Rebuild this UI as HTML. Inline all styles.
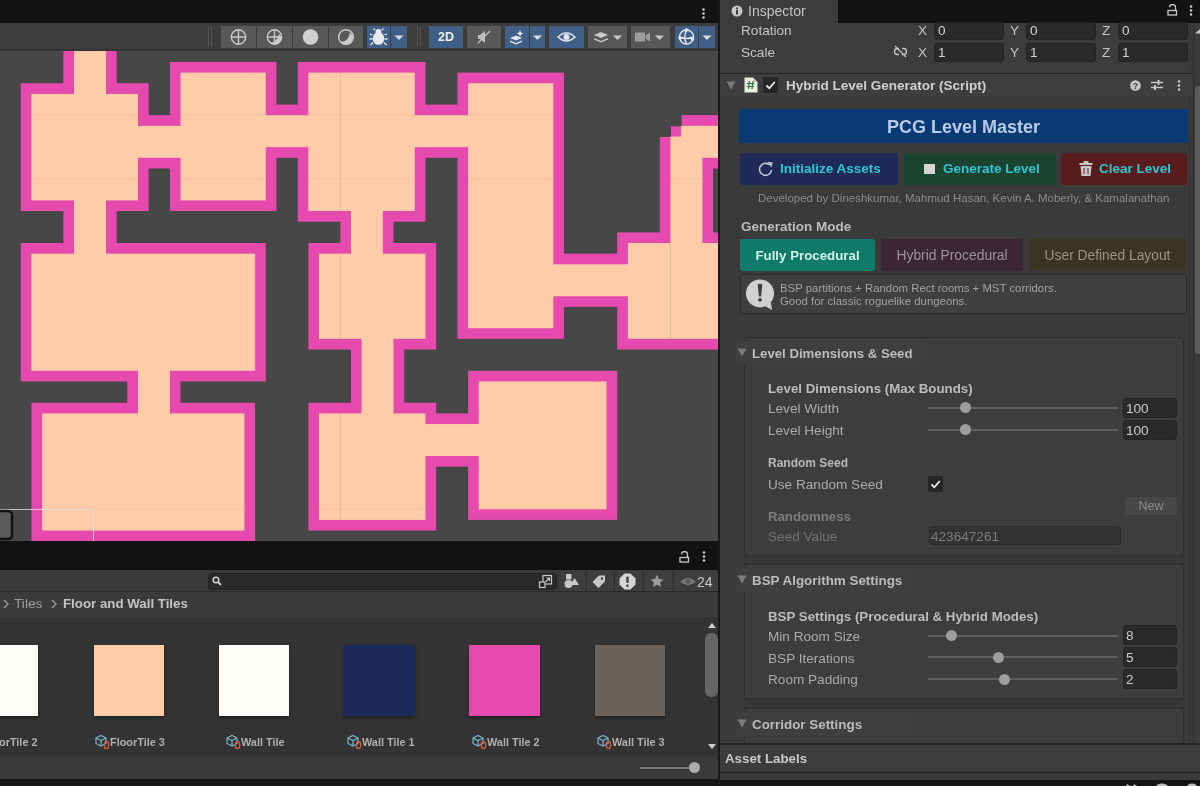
<!DOCTYPE html>
<html><head><meta charset="utf-8">
<style>
*{box-sizing:border-box;margin:0;padding:0}
html,body{width:1200px;height:786px;overflow:hidden;background:#121212;font-family:"Liberation Sans",sans-serif;position:relative}
.a{position:absolute}
.t{position:absolute;white-space:nowrap;line-height:1;will-change:transform}
.tb{position:absolute;top:26px;height:22px;background:#585858}
.bl{background:#3f5f87}
.fld{position:absolute;background:#2a2a2a;border:1px solid #232323;border-radius:3px}
.lbl{color:#c4c4c4;font-size:13.6px}
.bold{font-weight:bold}
</style></head><body>
<!-- SCENE PANEL -->
<div class="a" style="left:0;top:0;width:718px;height:23px;background:#121212"></div>
<div class="a" style="left:702px;top:5px;width:3px;height:11px">
 <svg width="3" height="11"><circle cx="1.5" cy="1.5" r="1.3" fill="#c8c8c8"/><circle cx="1.5" cy="5.5" r="1.3" fill="#c8c8c8"/><circle cx="1.5" cy="9.5" r="1.3" fill="#c8c8c8"/></svg></div>
<div class="a" style="left:0;top:23px;width:718px;height:28px;background:#3c3c3c"></div><div class="a" style="left:0;top:49px;width:718px;height:2px;background:#333"></div>
<div class="a" style="left:208px;top:27px;width:1px;height:20px;background:#555"></div>
<div class="a" style="left:211px;top:27px;width:1px;height:20px;background:#555"></div>
<div class="a" style="left:417px;top:27px;width:1px;height:20px;background:#555"></div>
<div class="a" style="left:420px;top:27px;width:1px;height:20px;background:#555"></div>
<!-- group1 -->
<div class="tb" style="left:221px;width:35px"><svg width="35" height="22"><g fill="none" stroke="#c9c9c9" stroke-width="1.4"><circle cx="17.5" cy="11" r="7.2"/><path d="M10.3 11H24.7M17.5 3.8V18.2"/></g></svg></div>
<div class="tb" style="left:257px;width:35px"><svg width="35" height="22"><g fill="none" stroke="#c9c9c9" stroke-width="1.4"><circle cx="17.5" cy="11" r="7.2"/><path d="M10.3 11H24.7M17.5 3.8V18.2"/></g><path d="M24.7 11A7.2 7.2 0 0 1 10.3 11H17.5V3.8A7.2 7.2 0 0 1 24.7 11Z" fill="#c9c9c9" opacity="0"/><path d="M24.7 11A7.2 7.2 0 0 1 13 16.8Q20 16 22 8Z" fill="#c9c9c9"/></svg></div>
<div class="tb" style="left:293px;width:35px"><svg width="35" height="22"><circle cx="17.5" cy="11" r="7.8" fill="#cfcfcf"/></svg></div>
<div class="tb" style="left:329px;width:34px"><svg width="34" height="22"><circle cx="17" cy="11" r="7.3" fill="none" stroke="#c9c9c9" stroke-width="1.5"/><path d="M24.3 11A7.3 7.3 0 0 1 11 15.5Q19.5 17 21 6Z" fill="#c9c9c9"/></svg></div>
<!-- bug -->
<div class="tb bl" style="left:367px;width:23px"><svg width="23" height="22"><g fill="#e8eaee"><ellipse cx="11.5" cy="12.5" rx="5.8" ry="6.3"/><circle cx="11.5" cy="6" r="3"/></g><g stroke="#e8eaee" stroke-width="1.3" fill="none"><path d="M8 4L6.5 2.5M15 4L16.5 2.5M5.5 9L3 8M17.5 9L20 8M5.5 13H2.5M17.5 13H20.5M6 16.5L3.5 19M17 16.5L19.5 19"/></g></svg></div>
<div class="tb bl" style="left:391px;width:16px"><svg width="16" height="22"><path d="M3.5 9.5H12.5L8 14Z" fill="#d8dde5"/></svg></div>
<!-- 2D -->
<div class="tb bl" style="left:429px;width:34px"><span class="t" style="left:0;width:34px;text-align:center;top:5px;font-size:12.5px;font-weight:bold;color:#f0f0f0">2D</span></div>
<!-- audio -->
<div class="tb" style="left:467px;width:34px"><svg width="34" height="22"><path d="M18 7L13 11H11V15H13L18 19Z" fill="#c0c0c0" transform="translate(0,-2)"/><path d="M11 17L23 5" stroke="#c0c0c0" stroke-width="1.5"/></svg></div>
<!-- effects -->
<div class="tb bl" style="left:505px;width:24px"><svg width="24" height="22"><g fill="#e4e8ee"><path d="M5 12L11 9.5L17 12L11 14.5Z"/><path d="M5 14.5L11 17L17 14.5L17 16L11 18.5L5 16Z"/><path d="M15 4L16 6.5L18.5 7.5L16 8.5L15 11L14 8.5L11.5 7.5L14 6.5Z"/></g></svg></div>
<div class="tb bl" style="left:530px;width:15px"><svg width="15" height="22"><path d="M3 9.5H12L7.5 14Z" fill="#d8dde5"/></svg></div>
<!-- eye -->
<div class="tb bl" style="left:549px;width:35px"><svg width="35" height="22"><path d="M9 11Q17.5 3 26 11Q17.5 19 9 11Z" fill="none" stroke="#dfe4ea" stroke-width="1.6"/><circle cx="17.5" cy="11" r="3" fill="#dfe4ea"/></svg></div>
<!-- layers -->
<div class="tb" style="left:588px;width:39px"><svg width="39" height="22"><g fill="#c9c9c9"><path d="M6 9L13 6L20 9L13 12Z"/><path d="M6 12L13 15L20 12L20 13.5L13 16.5L6 13.5Z"/></g><path d="M25 9.5H34L29.5 14Z" fill="#c9c9c9"/></svg></div>
<!-- camera -->
<div class="tb" style="left:631px;width:39px"><svg width="39" height="22"><g fill="#9e9e9e"><rect x="4" y="6.5" width="10" height="9"/><path d="M14.5 9.5L19 6.5V15.5L14.5 12.5Z"/></g><path d="M24 9.5H33L28.5 14Z" fill="#c9c9c9"/></svg></div>
<!-- gizmo -->
<div class="tb bl" style="left:675px;width:23px"><svg width="23" height="22"><g fill="none" stroke="#e4e8ee" stroke-width="1.4"><circle cx="11.5" cy="11" r="7"/><path d="M4.5 11Q11.5 14 18.5 11M11.5 4Q8 11 11.5 18"/></g><g fill="#e4e8ee"><circle cx="11.5" cy="4" r="1.8"/><circle cx="5" cy="12" r="1.8"/><circle cx="17.5" cy="13" r="1.8"/></g></svg></div>
<div class="tb bl" style="left:699px;width:16px"><svg width="16" height="22"><path d="M3.5 9.5H12.5L8 14Z" fill="#d8dde5"/></svg></div>

<div class="a" style="left:0;top:51px;width:718px;height:490px;background:#474747;overflow:hidden">
<svg width="718" height="490" style="position:absolute;left:0;top:0"><g fill="#e64aae"><rect x="20.80" y="32.25" width="127.80" height="127.80"/><rect x="63.40" y="-42.30" width="53.25" height="106.50"/><rect x="116.65" y="64.20" width="85.20" height="53.25"/><rect x="169.90" y="10.95" width="106.50" height="149.10"/><rect x="244.45" y="53.55" width="85.20" height="53.25"/><rect x="297.70" y="10.95" width="127.80" height="159.75"/><rect x="393.55" y="53.55" width="95.85" height="53.25"/><rect x="457.45" y="21.60" width="106.50" height="266.25"/><rect x="532.00" y="202.65" width="117.15" height="53.25"/><rect x="617.20" y="181.35" width="149.10" height="117.15"/><rect x="659.80" y="74.85" width="53.25" height="138.45"/><rect x="670.45" y="64.20" width="42.60" height="42.60"/><rect x="681.10" y="64.20" width="85.20" height="53.25"/><rect x="63.40" y="128.10" width="53.25" height="95.85"/><rect x="20.80" y="192.00" width="244.95" height="138.45"/><rect x="127.30" y="298.50" width="53.25" height="85.20"/><rect x="31.45" y="351.75" width="223.65" height="138.45"/><rect x="340.30" y="138.75" width="53.25" height="85.20"/><rect x="308.35" y="192.00" width="127.80" height="106.50"/><rect x="350.95" y="266.55" width="53.25" height="117.15"/><rect x="308.35" y="351.75" width="127.80" height="127.80"/><rect x="404.20" y="362.40" width="95.85" height="53.25"/><rect x="468.10" y="319.80" width="149.10" height="149.10"/></g><g fill="#474747"><rect x="659.30" y="74.35" width="11.65" height="11.65"/><rect x="669.95" y="63.70" width="11.65" height="11.65"/></g><g fill="#ffcba8"><rect x="31.45" y="42.90" width="106.50" height="106.50"/><rect x="74.05" y="-31.65" width="31.95" height="85.20"/><rect x="127.30" y="74.85" width="63.90" height="31.95"/><rect x="180.55" y="21.60" width="85.20" height="127.80"/><rect x="255.10" y="64.20" width="63.90" height="31.95"/><rect x="308.35" y="21.60" width="106.50" height="138.45"/><rect x="404.20" y="64.20" width="74.55" height="31.95"/><rect x="468.10" y="32.25" width="85.20" height="244.95"/><rect x="542.65" y="213.30" width="95.85" height="31.95"/><rect x="627.85" y="192.00" width="127.80" height="95.85"/><rect x="670.45" y="85.50" width="31.95" height="117.15"/><rect x="681.10" y="74.85" width="21.30" height="21.30"/><rect x="691.75" y="74.85" width="63.90" height="31.95"/><rect x="74.05" y="138.75" width="31.95" height="74.55"/><rect x="31.45" y="202.65" width="223.65" height="117.15"/><rect x="137.95" y="309.15" width="31.95" height="63.90"/><rect x="42.10" y="362.40" width="202.35" height="117.15"/><rect x="350.95" y="149.40" width="31.95" height="63.90"/><rect x="319.00" y="202.65" width="106.50" height="85.20"/><rect x="361.60" y="277.20" width="31.95" height="95.85"/><rect x="319.00" y="362.40" width="106.50" height="106.50"/><rect x="414.85" y="373.05" width="74.55" height="31.95"/><rect x="478.75" y="330.45" width="127.80" height="127.80"/></g><clipPath id="fl"><rect x="31.45" y="42.90" width="106.50" height="106.50"/><rect x="74.05" y="-31.65" width="31.95" height="85.20"/><rect x="127.30" y="74.85" width="63.90" height="31.95"/><rect x="180.55" y="21.60" width="85.20" height="127.80"/><rect x="255.10" y="64.20" width="63.90" height="31.95"/><rect x="308.35" y="21.60" width="106.50" height="138.45"/><rect x="404.20" y="64.20" width="74.55" height="31.95"/><rect x="468.10" y="32.25" width="85.20" height="244.95"/><rect x="542.65" y="213.30" width="95.85" height="31.95"/><rect x="627.85" y="192.00" width="127.80" height="95.85"/><rect x="670.45" y="85.50" width="31.95" height="117.15"/><rect x="681.10" y="74.85" width="21.30" height="21.30"/><rect x="691.75" y="74.85" width="63.90" height="31.95"/><rect x="74.05" y="138.75" width="31.95" height="74.55"/><rect x="31.45" y="202.65" width="223.65" height="117.15"/><rect x="137.95" y="309.15" width="31.95" height="63.90"/><rect x="42.10" y="362.40" width="202.35" height="117.15"/><rect x="350.95" y="149.40" width="31.95" height="63.90"/><rect x="319.00" y="202.65" width="106.50" height="85.20"/><rect x="361.60" y="277.20" width="31.95" height="95.85"/><rect x="319.00" y="362.40" width="106.50" height="106.50"/><rect x="414.85" y="373.05" width="74.55" height="31.95"/><rect x="478.75" y="330.45" width="127.80" height="127.80"/></clipPath>
<g clip-path="url(#fl)"><g stroke="#d8c08a" stroke-width="1" fill="none" opacity="0.45"><path d="M0 64H718M0 127.8H718M0 458H718"/></g><g stroke="#d89870" stroke-width="1" fill="none" opacity="0.35"><path d="M340.5 0V490M670.5 0V490"/></g></g>
<g stroke="#e0e0e0" stroke-width="1" fill="none" opacity="0.8"><path d="M0 458.5H93.5V490"/></g>
<rect x="-6" y="460" width="18" height="28" rx="4" fill="#5a5a5a" stroke="#111" stroke-width="2.5"/>
</svg>
</div>
<div class="a" style="left:718px;top:0;width:2px;height:786px;background:#191919"></div>

<!-- INSPECTOR -->
<div class="a" style="left:720px;top:0;width:480px;height:786px;background:#3a3a3a"></div>
<div class="a" style="left:720px;top:0;width:480px;height:23px;background:#121212"></div>
<div class="a" style="left:720px;top:0;width:118px;height:23px;background:#3c3c3c"></div>
<svg class="a" style="left:731px;top:5px" width="12" height="12"><circle cx="6" cy="6" r="5.5" fill="#c8c8c8"/><rect x="5" y="5" width="2" height="4.5" fill="#3c3c3c"/><circle cx="6" cy="3.3" r="1.1" fill="#3c3c3c"/></svg>
<span class="t" style="left:748px;top:4px;font-size:14px;color:#c4c4c4">Inspector</span>
<svg class="a" style="left:1167px;top:4px" width="11" height="12"><path d="M2.5 3.2A3 2.6 0 0 1 8.5 3.2V6.5" fill="none" stroke="#c8c8c8" stroke-width="1.3"/><rect x="1" y="6.5" width="8.5" height="4.5" fill="none" stroke="#c8c8c8" stroke-width="1.3"/></svg>
<svg class="a" style="left:1189px;top:5px" width="4" height="11"><circle cx="2" cy="1.5" r="1.3" fill="#c8c8c8"/><circle cx="2" cy="5.5" r="1.3" fill="#c8c8c8"/><circle cx="2" cy="9.5" r="1.3" fill="#c8c8c8"/></svg>

<!-- transform rows -->
<div class="a" style="left:720px;top:23px;width:467px;height:50px;background:#3c3c3c"></div>
<span class="t lbl" style="left:741px;top:24px">Rotation</span>
<span class="t lbl" style="left:741px;top:46px">Scale</span>
<svg class="a" style="left:893px;top:45px" width="15" height="13"><g fill="none" stroke="#c8c8c8" stroke-width="1.3"><path d="M6 3.5H4.5A3 3 0 0 0 4.5 9.5H6M9 3.5H10.5A3 3 0 0 1 10.5 9.5H9M2 1L13 12"/></g></svg>
<span class="t lbl" style="left:918px;top:24px">X</span><div class="fld" style="left:934px;top:22px;width:70px;height:18px"></div><span class="t lbl" style="left:938px;top:24px;color:#d2d2d2">0</span>
<span class="t lbl" style="left:1010px;top:24px">Y</span><div class="fld" style="left:1026px;top:22px;width:70px;height:18px"></div><span class="t lbl" style="left:1030px;top:24px;color:#d2d2d2">0</span>
<span class="t lbl" style="left:1102px;top:24px">Z</span><div class="fld" style="left:1118px;top:22px;width:70px;height:18px"></div><span class="t lbl" style="left:1122px;top:24px;color:#d2d2d2">0</span>
<span class="t lbl" style="left:918px;top:46px">X</span><div class="fld" style="left:934px;top:43px;width:70px;height:19px"></div><span class="t lbl" style="left:938px;top:46px;color:#d2d2d2">1</span>
<span class="t lbl" style="left:1010px;top:46px">Y</span><div class="fld" style="left:1026px;top:43px;width:70px;height:19px"></div><span class="t lbl" style="left:1030px;top:46px;color:#d2d2d2">1</span>
<span class="t lbl" style="left:1102px;top:46px">Z</span><div class="fld" style="left:1118px;top:43px;width:70px;height:19px"></div><span class="t lbl" style="left:1122px;top:46px;color:#d2d2d2">1</span>

<!-- component header -->
<div class="a" style="left:720px;top:73px;width:473px;height:1px;background:#262626"></div>
<div class="a" style="left:720px;top:74px;width:473px;height:22px;background:#3e3e3e"></div>
<svg class="a" style="left:726px;top:81px" width="10" height="9"><path d="M0.5 0.5H9.5L5 8.5Z" fill="#7a7a7a"/></svg>
<svg class="a" style="left:744px;top:77px" width="14" height="16"><path d="M0.5 0.5H9L13.5 5V15.5H0.5Z" fill="#ecece6"/><path d="M9 0.5V5H13.5" fill="#c8c8c0"/><g stroke="#2f7a3a" stroke-width="1.2"><path d="M5.5 4L4.5 12M9 4L8 12M3 6.5H10.5M2.7 9.5H10"/></g></svg>
<div class="a" style="left:763px;top:77px;width:15px;height:16px;background:#262626;border-radius:2px"></div>
<svg class="a" style="left:763px;top:77px" width="15" height="16"><path d="M3.5 8.5L6.3 11.3L11.8 5" fill="none" stroke="#f0f0f0" stroke-width="1.8"/></svg>
<span class="t bold" style="left:786px;top:79px;font-size:13.5px;color:#d0d0d0">Hybrid Level Generator (Script)</span>
<svg class="a" style="left:1130px;top:80px;will-change:transform" width="11" height="11"><circle cx="5.5" cy="5.5" r="5.3" fill="#c8c8c8"/><text x="5.5" y="8.8" font-size="9" font-weight="bold" text-anchor="middle" fill="#3e3e3e" font-family="Liberation Sans">?</text></svg>
<svg class="a" style="left:1151px;top:79px" width="12" height="12"><g stroke="#c8c8c8" stroke-width="1.3"><path d="M0 3.5H12M0 8.5H12"/></g><g fill="#c8c8c8"><rect x="6.5" y="1" width="2" height="5"/><rect x="3" y="6" width="2" height="5"/></g></svg>
<svg class="a" style="left:1177px;top:80px" width="4" height="11"><circle cx="2" cy="1.5" r="1.3" fill="#c8c8c8"/><circle cx="2" cy="5.5" r="1.3" fill="#c8c8c8"/><circle cx="2" cy="9.5" r="1.3" fill="#c8c8c8"/></svg>

<!-- scrollbar -->
<div class="a" style="left:1193px;top:23px;width:7px;height:721px;background:#3a3a3a"></div>
<div class="a" style="left:1189px;top:96px;width:1px;height:648px;background:#323232"></div><div class="a" style="left:1193px;top:23px;width:1px;height:721px;background:#2e2e2e"></div>
<div class="a" style="left:1194.5px;top:86px;width:7px;height:268px;background:#5c5c5c;border-radius:3px"></div><svg class="a" style="left:1195px;top:29px" width="5" height="5"><path d="M0 4.5H5V0Z" fill="#c8c8c8"/></svg>

<!-- inspector body -->
<div class="a" style="left:739px;top:109px;width:449px;height:34px;background:#0a3a74"></div>
<span class="t bold" style="left:739px;width:449px;text-align:center;top:118px;font-size:18px;color:#b9cbe6">PCG Level Master</span>

<div class="a" style="left:740px;top:153px;width:158px;height:32px;background:#1f2a58;border-radius:2px"></div>
<svg class="a" style="left:758px;top:161px" width="17" height="16"><path d="M13.5 9A6 6 0 1 1 11.2 3.6" fill="none" stroke="#c0c8dc" stroke-width="1.6"/><path d="M9.5 0.8L14.8 1.5L13.2 6.5Z" fill="#c0c8dc"/></svg>
<span class="t bold" style="left:780px;top:162px;font-size:13.5px;color:#2fc6d3">Initialize Assets</span>

<div class="a" style="left:904px;top:153px;width:152px;height:32px;background:#1b4430;border-radius:2px"></div>
<div class="a" style="left:924px;top:164px;width:11px;height:10px;background:#d4d4d4"></div>
<span class="t bold" style="left:943px;top:162px;font-size:13.5px;color:#2fc6d3">Generate Level</span>

<div class="a" style="left:1061px;top:153px;width:126px;height:32px;background:#591c1d;border-radius:2px"></div>
<svg class="a" style="left:1079px;top:161px" width="14" height="15"><g fill="#c8c8c8"><rect x="0.5" y="2" width="13" height="2"/><rect x="4.5" y="0" width="5" height="2"/><path d="M1.5 5H12.5L11.5 15H2.5Z"/></g><g stroke="#591c1d" stroke-width="1"><path d="M5 7V13M9 7V13"/></g></svg>
<span class="t bold" style="left:1099px;top:162px;font-size:13.5px;color:#2fc6d3">Clear Level</span>

<span class="t" style="left:758px;top:193px;font-size:11.5px;color:#8c8c8c">Developed by Dineshkumar, Mahmud Hasan, Kevin A. Moberly, &amp; Kamalanathan</span>

<span class="t bold" style="left:741px;top:220px;font-size:13.5px;color:#bcbcbc">Generation Mode</span>
<div class="a" style="left:740px;top:239px;width:135px;height:32px;background:#0e7a6a;border-radius:3px"></div>
<span class="t bold" style="left:740px;width:135px;text-align:center;top:249px;font-size:13.3px;color:#d6efe9">Fully Procedural</span>
<div class="a" style="left:881px;top:239px;width:142px;height:32px;background:#3b2631;border-radius:3px"></div>
<span class="t" style="left:881px;width:142px;text-align:center;top:249px;font-size:13.9px;color:#9c9298">Hybrid Procedural</span>
<div class="a" style="left:1029px;top:239px;width:157px;height:32px;background:#3a3522;border-radius:3px"></div>
<span class="t" style="left:1029px;width:157px;text-align:center;top:249px;font-size:13.8px;color:#9a9682">User Defined Layout</span>

<div class="a" style="left:740px;top:274px;width:447px;height:40px;background:#3f3f3f;border:1px solid #2b2b2b;border-radius:3px"></div>
<svg class="a" style="left:745px;top:278px" width="30" height="33"><circle cx="15" cy="15.4" r="14" fill="#d0d0d0"/><path d="M19 27.5L27 32L25.5 22Z" fill="#d0d0d0"/><path d="M12.6 6.5Q15 5 17.4 6.5L16.1 18.2Q15 19 13.9 18.2Z" fill="#3f3f3f"/><circle cx="15" cy="21.8" r="1.9" fill="#3f3f3f"/></svg>
<span class="t" style="left:780px;top:283px;font-size:11.4px;color:#a2a2a2">BSP partitions + Random Rect rooms + MST corridors.</span>
<span class="t" style="left:780px;top:296px;font-size:11.4px;color:#a2a2a2">Good for classic roguelike dungeons.</span>

<!-- section 1 -->
<div class="a" style="left:744px;top:337px;width:440px;height:218px;background:#3d3d3d;border:1px solid #2f2f2f;border-radius:3px"></div>
<div class="a" style="left:736px;top:341px;width:188px;height:24px;background:#3f3f3f"></div>
<svg class="a" style="left:737px;top:348px" width="10" height="9"><path d="M0.5 0.5H9.5L5 8.5Z" fill="#7c7c7c"/></svg>
<span class="t bold" style="left:752px;top:347px;font-size:13.2px;color:#bcbcbc">Level Dimensions &amp; Seed</span>
<span class="t bold" style="left:768px;top:382px;font-size:13.3px;color:#bcbcbc">Level Dimensions (Max Bounds)</span>
<span class="t lbl" style="left:768px;top:402px;color:#aaaaaa">Level Width</span>
<span class="t lbl" style="left:768px;top:424px;color:#aaaaaa">Level Height</span>
<div class="a" style="left:928px;top:407px;width:190px;height:2px;background:#5e5e5e"></div>
<div class="a" style="left:960px;top:402px;width:11px;height:11px;border-radius:50%;background:#9d9d9d"></div>
<div class="fld" style="left:1123px;top:398px;width:54px;height:20px"></div>
<span class="t lbl" style="left:1126px;top:402px;color:#cacaca">100</span>
<div class="a" style="left:928px;top:429px;width:190px;height:2px;background:#5e5e5e"></div>
<div class="a" style="left:960px;top:424px;width:11px;height:11px;border-radius:50%;background:#9d9d9d"></div>
<div class="fld" style="left:1123px;top:420px;width:54px;height:20px"></div>
<span class="t lbl" style="left:1126px;top:424px;color:#cacaca">100</span>

<span class="t bold" style="left:768px;top:457px;font-size:12px;color:#b8b8b8">Random Seed</span>
<span class="t lbl" style="left:768px;top:478px;color:#aaaaaa">Use Random Seed</span>
<div class="a" style="left:928px;top:476px;width:15px;height:16px;background:#262626;border-radius:2px"></div>
<svg class="a" style="left:928px;top:476px" width="15" height="16"><path d="M3.5 8.5L6.3 11.3L11.8 5" fill="none" stroke="#f0f0f0" stroke-width="1.8"/></svg>
<div class="a" style="left:1125px;top:497px;width:52px;height:18px;background:#474747;border-radius:2px"></div>
<span class="t" style="left:1125px;width:52px;text-align:center;top:500px;font-size:12.5px;color:#8c8c8c">New</span>
<span class="t bold" style="left:768px;top:510px;font-size:13.2px;color:#7c7c7c">Randomness</span>
<span class="t lbl" style="left:768px;top:530px;color:#727272">Seed Value</span>
<div class="a" style="left:929px;top:526px;width:192px;height:19px;background:#333;border:1px solid #2c2c2c;border-radius:3px"></div>
<span class="t lbl" style="left:931px;top:530px;color:#7a7a7a">423647261</span>

<!-- section 2 -->
<div class="a" style="left:744px;top:554px;width:440px;height:11px;background:#363636"></div><div class="a" style="left:744px;top:698px;width:440px;height:11px;background:#363636"></div>
<div class="a" style="left:744px;top:564px;width:440px;height:135px;background:#3d3d3d;border:1px solid #2f2f2f;border-radius:3px"></div>
<div class="a" style="left:736px;top:568px;width:176px;height:24px;background:#3f3f3f"></div>
<svg class="a" style="left:737px;top:575px" width="10" height="9"><path d="M0.5 0.5H9.5L5 8.5Z" fill="#7c7c7c"/></svg>
<span class="t bold" style="left:752px;top:574px;font-size:13.4px;color:#bcbcbc">BSP Algorithm Settings</span>
<span class="t bold" style="left:768px;top:610px;font-size:13.3px;color:#bcbcbc">BSP Settings (Procedural &amp; Hybrid Modes)</span>
<span class="t lbl" style="left:768px;top:630px;color:#aaaaaa">Min Room Size</span>
<span class="t lbl" style="left:768px;top:652px;color:#aaaaaa">BSP Iterations</span>
<span class="t lbl" style="left:768px;top:673px;color:#aaaaaa">Room Padding</span>
<div class="a" style="left:928px;top:635px;width:190px;height:2px;background:#5e5e5e"></div>
<div class="a" style="left:946px;top:630px;width:11px;height:11px;border-radius:50%;background:#9d9d9d"></div>
<div class="fld" style="left:1123px;top:625px;width:54px;height:20px"></div>
<span class="t lbl" style="left:1126px;top:629px;color:#cacaca">8</span>
<div class="a" style="left:928px;top:656px;width:190px;height:2px;background:#5e5e5e"></div>
<div class="a" style="left:993px;top:652px;width:11px;height:11px;border-radius:50%;background:#9d9d9d"></div>
<div class="fld" style="left:1123px;top:647px;width:54px;height:20px"></div>
<span class="t lbl" style="left:1126px;top:651px;color:#cacaca">5</span>
<div class="a" style="left:928px;top:678px;width:190px;height:2px;background:#5e5e5e"></div>
<div class="a" style="left:999px;top:674px;width:11px;height:11px;border-radius:50%;background:#9d9d9d"></div>
<div class="fld" style="left:1123px;top:669px;width:54px;height:20px"></div>
<span class="t lbl" style="left:1126px;top:673px;color:#cacaca">2</span>

<!-- section 3 -->
<div class="a" style="left:744px;top:708px;width:440px;height:60px;background:#3d3d3d;border:1px solid #2f2f2f;border-radius:3px"></div>
<div class="a" style="left:736px;top:712px;width:176px;height:24px;background:#3f3f3f"></div>
<svg class="a" style="left:737px;top:719px" width="10" height="9"><path d="M0.5 0.5H9.5L5 8.5Z" fill="#7c7c7c"/></svg>
<span class="t bold" style="left:752px;top:718px;font-size:13.4px;color:#bcbcbc">Corridor Settings</span>

<!-- asset labels -->
<div class="a" style="left:720px;top:743px;width:480px;height:2px;background:#262626"></div>
<div class="a" style="left:720px;top:745px;width:480px;height:27px;background:#3c3c3c"></div>
<span class="t bold" style="left:725px;top:752px;font-size:13.3px;color:#c8c8c8">Asset Labels</span>
<div class="a" style="left:720px;top:772px;width:480px;height:1px;background:#232323"></div>
<div class="a" style="left:720px;top:773px;width:480px;height:7px;background:#3a3a3a"></div>
<div class="a" style="left:720px;top:780px;width:480px;height:6px;background:#141414"></div>
<svg class="a" style="left:1120px;top:780px" width="80" height="6"><g fill="#bdbdbd"><path d="M7 4L10 6H6ZM14 4L17 6H13Z"/><ellipse cx="42" cy="6.5" rx="6" ry="3"/><ellipse cx="72" cy="6.5" rx="5" ry="3"/></g></svg>


<!-- PROJECT -->
<div class="a" style="left:0;top:541px;width:718px;height:29px;background:#121212"></div>
<svg class="a" style="left:679px;top:551px" width="11" height="12"><path d="M2.5 3.2A3 2.6 0 0 1 8.5 3.2V6.5" fill="none" stroke="#c8c8c8" stroke-width="1.3"/><rect x="1" y="6.5" width="8.5" height="4.5" fill="none" stroke="#c8c8c8" stroke-width="1.3"/></svg>
<svg class="a" style="left:702px;top:551px" width="4" height="11"><circle cx="2" cy="1.5" r="1.3" fill="#c8c8c8"/><circle cx="2" cy="5.5" r="1.3" fill="#c8c8c8"/><circle cx="2" cy="9.5" r="1.3" fill="#c8c8c8"/></svg>
<div class="a" style="left:0;top:570px;width:718px;height:22px;background:#3a3a3a"></div>
<div class="a" style="left:208px;top:573px;width:349px;height:17px;background:#2a2a2a;border:1px solid #222;border-radius:4px"></div>
<svg class="a" style="left:212px;top:576px" width="10" height="10"><circle cx="4" cy="4" r="2.8" fill="none" stroke="#d0d0d0" stroke-width="1.5"/><path d="M6 6L9 9" stroke="#d0d0d0" stroke-width="1.8"/></svg>
<svg class="a" style="left:538px;top:574px" width="15" height="15"><rect x="5" y="1.5" width="8.5" height="8.5" fill="none" stroke="#c8c8c8" stroke-width="1.2"/><rect x="1.5" y="8" width="5.5" height="5.5" fill="#2a2a2a" stroke="#c8c8c8" stroke-width="1.2"/><path d="M8 7.5L11.5 4M8.5 4H11.5V7" fill="none" stroke="#c8c8c8" stroke-width="1.2"/></svg>
<div class="a" style="left:559px;top:571px;width:26px;height:20px;background:#3e3e3e"></div>
<svg class="a" style="left:563px;top:573px" width="18" height="16"><g fill="#c8c8c8"><rect x="3" y="1" width="5.5" height="5.5"/><circle cx="5.5" cy="11" r="4"/><path d="M11.5 5L16 12H7Z"/></g></svg>
<div class="a" style="left:586px;top:571px;width:27px;height:20px;background:#3e3e3e"></div>
<svg class="a" style="left:591px;top:574px" width="16" height="15"><path d="M8 1.5H14V7.5L7.5 14L1.5 8Z" fill="#c8c8c8"/><circle cx="11" cy="4.5" r="1.2" fill="#3e3e3e"/></svg>
<div class="a" style="left:614px;top:571px;width:28px;height:20px;background:#3e3e3e"></div>
<svg class="a" style="left:619px;top:573px" width="17" height="17"><path d="M5.5 0.5H11.5L16.5 5.5V11.5L11.5 16.5H5.5L0.5 11.5V5.5Z" fill="#d6d6d6"/><rect x="7.3" y="3.5" width="2.4" height="6.5" rx="1" fill="#3e3e3e"/><circle cx="8.5" cy="12.8" r="1.3" fill="#3e3e3e"/></svg>
<div class="a" style="left:643px;top:571px;width:29px;height:20px;background:#3e3e3e"></div>
<svg class="a" style="left:650px;top:574px" width="14" height="14"><path d="M7 0.8L8.9 5.1L13.5 5.4L10 8.4L11.1 13L7 10.6L2.9 13L4 8.4L0.5 5.4L5.1 5.1Z" fill="#a0a0a0"/></svg>
<div class="a" style="left:673px;top:571px;width:45px;height:20px;background:#3e3e3e"></div>
<svg class="a" style="left:679px;top:576px" width="18" height="11"><path d="M1 5.5Q9 -1.5 17 5.5Q9 12.5 1 5.5Z" fill="#7a7a7a"/><circle cx="9" cy="5.5" r="2.5" fill="#5a5a5a"/></svg>
<span class="t" style="left:697px;top:575px;font-size:14px;color:#c8c8c8">24</span>

<div class="a" style="left:0;top:592px;width:718px;height:25px;background:#3b3b3b"></div><div class="a" style="left:0;top:591px;width:718px;height:1px;background:#2a2a2a"></div><div class="a" style="left:558px;top:571px;width:1px;height:20px;background:#2e2e2e"></div><div class="a" style="left:586px;top:571px;width:1px;height:20px;background:#2e2e2e"></div><div class="a" style="left:614px;top:571px;width:1px;height:20px;background:#2e2e2e"></div><div class="a" style="left:643px;top:571px;width:1px;height:20px;background:#2e2e2e"></div><div class="a" style="left:673px;top:571px;width:1px;height:20px;background:#2e2e2e"></div>
<svg class="a" style="left:3px;top:599px" width="6" height="10"><path d="M1 1L5 5L1 9" fill="none" stroke="#9a9a9a" stroke-width="1.4"/></svg>
<span class="t" style="left:14px;top:597px;font-size:13.7px;color:#9c9c9c">Tiles</span>
<svg class="a" style="left:51px;top:599px" width="6" height="10"><path d="M1 1L5 5L1 9" fill="none" stroke="#9a9a9a" stroke-width="1.4"/></svg>
<span class="t bold" style="left:63px;top:597px;font-size:13.3px;color:#c4c4c4">Floor and Wall Tiles</span>

<div class="a" style="left:0;top:617px;width:718px;height:140px;background:#333333"></div>
<!-- tiles -->
<div class="a" style="left:-33px;top:645px;width:71px;height:71px;background:#fdfcf8;box-shadow:0 2px 3px rgba(0,0,0,.4)"></div>
<div class="a" style="left:94px;top:645px;width:70px;height:71px;background:#ffcba8;box-shadow:0 2px 3px rgba(0,0,0,.4)"></div>
<div class="a" style="left:219px;top:645px;width:70px;height:71px;background:#fdfcf8;box-shadow:0 2px 3px rgba(0,0,0,.4)"></div>
<div class="a" style="left:344px;top:645px;width:71px;height:71px;background:#1c2a5c;box-shadow:0 2px 3px rgba(0,0,0,.4)"></div>
<div class="a" style="left:469px;top:645px;width:71px;height:71px;background:#e64aae;box-shadow:0 2px 3px rgba(0,0,0,.4)"></div>
<div class="a" style="left:595px;top:645px;width:70px;height:71px;background:#6a6159;box-shadow:0 2px 3px rgba(0,0,0,.4)"></div>
<span class="t" style="right:1162px;top:737px;font-size:10.9px;font-weight:bold;color:#b0b0b0">orTile 2</span><svg class="a" style="left:95px;top:734px" width="16" height="16"><g fill="none" stroke="#78b4cc" stroke-width="1.2"><path d="M1 4L6 1.5L11 4V9.5L6 12L1 9.5Z"/><path d="M1 4L6 6.5L11 4M6 6.5V12"/></g><ellipse cx="11.5" cy="11" rx="2.2" ry="3.6" fill="none" stroke="#d85a40" stroke-width="1.3"/></svg><span class="t" style="left:110px;top:737px;font-size:10.9px;font-weight:bold;color:#b0b0b0">FloorTile 3</span><svg class="a" style="left:226px;top:734px" width="16" height="16"><g fill="none" stroke="#78b4cc" stroke-width="1.2"><path d="M1 4L6 1.5L11 4V9.5L6 12L1 9.5Z"/><path d="M1 4L6 6.5L11 4M6 6.5V12"/></g><ellipse cx="11.5" cy="11" rx="2.2" ry="3.6" fill="none" stroke="#d85a40" stroke-width="1.3"/></svg><span class="t" style="left:241px;top:737px;font-size:10.9px;font-weight:bold;color:#b0b0b0">Wall Tile</span><svg class="a" style="left:347px;top:734px" width="16" height="16"><g fill="none" stroke="#78b4cc" stroke-width="1.2"><path d="M1 4L6 1.5L11 4V9.5L6 12L1 9.5Z"/><path d="M1 4L6 6.5L11 4M6 6.5V12"/></g><ellipse cx="11.5" cy="11" rx="2.2" ry="3.6" fill="none" stroke="#d85a40" stroke-width="1.3"/></svg><span class="t" style="left:362px;top:737px;font-size:10.9px;font-weight:bold;color:#b0b0b0">Wall Tile 1</span><svg class="a" style="left:472px;top:734px" width="16" height="16"><g fill="none" stroke="#78b4cc" stroke-width="1.2"><path d="M1 4L6 1.5L11 4V9.5L6 12L1 9.5Z"/><path d="M1 4L6 6.5L11 4M6 6.5V12"/></g><ellipse cx="11.5" cy="11" rx="2.2" ry="3.6" fill="none" stroke="#d85a40" stroke-width="1.3"/></svg><span class="t" style="left:487px;top:737px;font-size:10.9px;font-weight:bold;color:#b0b0b0">Wall Tile 2</span><svg class="a" style="left:597px;top:734px" width="16" height="16"><g fill="none" stroke="#78b4cc" stroke-width="1.2"><path d="M1 4L6 1.5L11 4V9.5L6 12L1 9.5Z"/><path d="M1 4L6 6.5L11 4M6 6.5V12"/></g><ellipse cx="11.5" cy="11" rx="2.2" ry="3.6" fill="none" stroke="#d85a40" stroke-width="1.3"/></svg><span class="t" style="left:612px;top:737px;font-size:10.9px;font-weight:bold;color:#b0b0b0">Wall Tile 3</span>
<!-- scrollbar -->
<svg class="a" style="left:707px;top:621px" width="10" height="8"><path d="M1 7H9L5 2Z" fill="#d0d0d0"/></svg>
<div class="a" style="left:705px;top:633px;width:13px;height:64px;background:#666;border-radius:6px"></div>
<svg class="a" style="left:707px;top:743px" width="10" height="8"><path d="M1 1H9L5 6Z" fill="#d0d0d0"/></svg>

<div class="a" style="left:0;top:757px;width:718px;height:22px;background:#3a3a3a"></div>
<div class="a" style="left:640px;top:767px;width:50px;height:2px;background:#747474"></div>
<div class="a" style="left:689px;top:762px;width:11px;height:11px;border-radius:50%;background:#acacac"></div>
<div class="a" style="left:0;top:779px;width:718px;height:7px;background:#141414"></div>

</body></html>
